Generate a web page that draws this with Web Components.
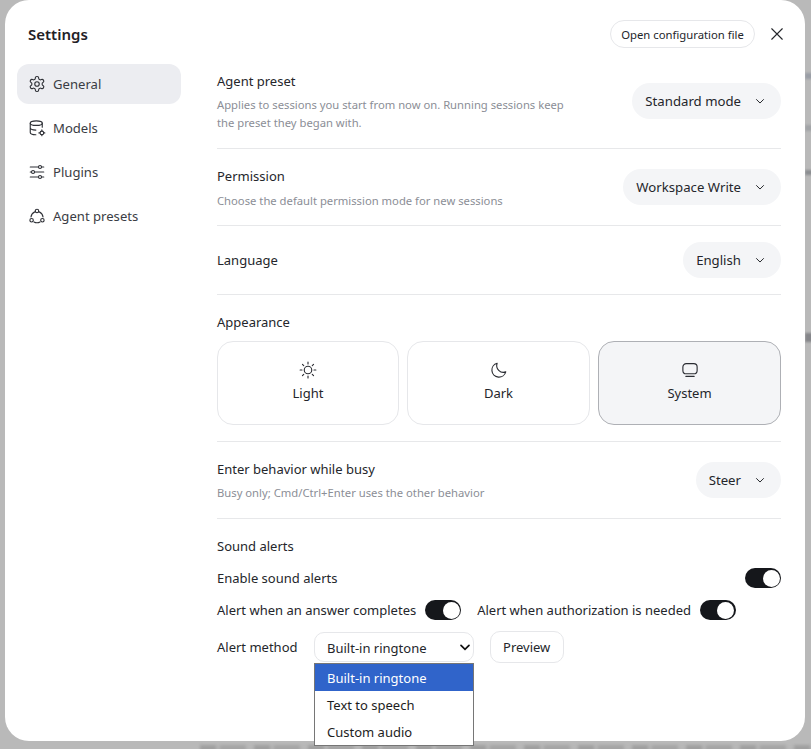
<!DOCTYPE html>
<html lang="en"><head><meta charset="utf-8"><title>Settings</title>
<style>
html,body{margin:0;height:100%;overflow:hidden}
body{background:#b9b9b9;font-family:"Noto Sans","Open Sans",sans-serif;color:#24262b;font-size:13px}
</style></head><body>
<settings-backdrop>
<settings-dialog>
  <span slot="title">Settings</span>
  <nav-item slot="nav" active icon="gear">General</nav-item>
  <nav-item slot="nav" icon="db">Models</nav-item>
  <nav-item slot="nav" icon="sliders">Plugins</nav-item>
  <nav-item slot="nav" icon="preset">Agent presets</nav-item>

  <setting-row style="--h:96px;--mt:6px;--pt:3px" label="Agent preset" desc="Applies to sessions you start from now on. Running sessions keep the preset they began with." value="Standard mode"></setting-row>
  <setting-row style="--h:77px" label="Permission" desc="Choose the default permission mode for new sessions" value="Workspace Write"></setting-row>
  <setting-row style="--h:69px" label="Language" value="English"></setting-row>
  <appearance-section></appearance-section>
  <setting-row style="--h:77px;--mt:6px;--pt:1px" label="Enter behavior while busy" desc="Busy only; Cmd/Ctrl+Enter uses the other behavior" value="Steer"></setting-row>
  <sound-section></sound-section>
</settings-dialog>
</settings-backdrop>
<script>
const FONT='"Noto Sans","Open Sans",sans-serif';
const ICONS={
gear:'<path d="M12.220 2h-.44a2 2 0 0 0-2 2v.18a2 2 0 0 1-1 1.730l-.43.25a2 2 0 0 1-2 0l-.15-.08a2 2 0 0 0-2.730.73l-.22.38a2 2 0 0 0 .73 2.730l.15.1a2 2 0 0 1 1 1.720v.51a2 2 0 0 1-1 1.740l-.15.09a2 2 0 0 0-.73 2.730l.22.38a2 2 0 0 0 2.730.73l.15-.08a2 2 0 0 1 2 0l.43.25a2 2 0 0 1 1 1.730V20a2 2 0 0 0 2 2h.44a2 2 0 0 0 2-2v-.18a2 2 0 0 1 1-1.730l.43-.25a2 2 0 0 1 2 0l.15.08a2 2 0 0 0 2.730-.73l.22-.39a2 2 0 0 0-.73-2.730l-.15-.08a2 2 0 0 1-1-1.740v-.5a2 2 0 0 1 1-1.740l.15-.09a2 2 0 0 0 .73-2.730l-.22-.38a2 2 0 0 0-2.730-.73l-.15.08a2 2 0 0 1-2 0l-.43-.25a2 2 0 0 1-1-1.730V4a2 2 0 0 0-2-2z" stroke-linejoin="round"/><circle cx="12" cy="12" r="3"/>',
db:'<ellipse cx="11" cy="5.500" rx="8" ry="3"/><path d="M3 5.500v12.500c0 1.700 3.300 3 7.500 3M19 5.500V11M3 11.800c0 1.700 3.300 3 7.500 3"/><circle cx="18.500" cy="18.500" r="2.400"/><path d="M18.500 14.500v1.400M18.500 21v1.400M14.500 18.500h1.400M21 18.500h1.400"/>',
sliders:'<path d="M3 5.300h11M18 5.300h3M3 12h1.700M8.700 12H21M3 18.700h11M18 18.700h3"/><circle cx="16" cy="5.300" r="2"/><circle cx="6.700" cy="12" r="2"/><circle cx="16" cy="18.700" r="2"/>',
preset:'<circle cx="12" cy="5.300" r="2.300"/><circle cx="4.800" cy="17.700" r="2.300"/><circle cx="19.200" cy="17.700" r="2.300"/><path d="M9 6.500A8.500 8.500 0 0 0 4 13.200M15 6.500A8.500 8.500 0 0 1 20 13.200M8 20a8.500 8.500 0 0 0 8 0"/>',
sun:'<circle cx="12" cy="12" r="5"/><path d="M12 1.500v2.500M12 20v2.500M1.500 12H4M20 12h2.500M4.600 4.600L6.300 6.300M17.700 17.700l1.700 1.700M4.600 19.400L6.300 17.700M17.700 6.300l1.700-1.700"/>',
moon:'<path d="M21 14.500A9 9 0 0 1 9.500 3a9.400 9.400 0 1 0 11.500 11.500z" stroke-linejoin="round"/>',
monitor:'<rect x="2.500" y="3.500" width="19" height="13.500" rx="4.500"/><path d="M6.500 20.500h11"/>',
chev:'<path d="M6 9.500l6 6 6-6"/>',
x:'<path d="M5 5l14 14M19 5L5 19"/>'
};
function icon(n,s,w){return `<svg width="${s}" height="${s}" viewBox="0 0 24 24" fill="none" stroke="currentColor" stroke-width="${w||1.700}" stroke-linecap="round" aria-hidden="true">${ICONS[n]}</svg>`}

class Base extends HTMLElement{
  render(html){ if(!this.shadowRoot) this.attachShadow({mode:'open'}); this.shadowRoot.innerHTML=html; }
}
customElements.define('settings-backdrop',class extends Base{connectedCallback(){this.render(`<style>
:host{display:block;height:100vh;position:relative;overflow:hidden;background:#b9b9b9}
.strip{position:absolute;left:200px;right:0;top:745px;height:7px;filter:blur(1.800px);opacity:.75;background:repeating-linear-gradient(90deg,#989898 0 16px,#b2b2b2 16px 20px,#9f9f9f 20px 46px,#b7b7b7 46px 54px)}
.spot{position:absolute;left:805px;width:8px;filter:blur(1.200px)}
.wrap{position:relative;padding-left:5px}
</style><div class="strip"></div>
<div class="spot" style="top:73px;height:6px;background:#9a9ea6"></div>
<div class="spot" style="top:125px;height:6px;background:#a2a4a7"></div>
<div class="spot" style="top:170px;height:5px;background:#8c8e91"></div>
<div class="spot" style="top:333px;height:9px;background:#85868a"></div>
<div class="wrap"><slot></slot></div>`);
}});
customElements.define('settings-dialog',class extends Base{connectedCallback(){this.render(`<style>
:host{display:block;width:800px;height:741px;box-sizing:border-box;background:#fff;border-radius:24px;position:relative}
header{display:flex;align-items:flex-start;justify-content:space-between;height:53px;padding:20px 19px 0 23px;box-sizing:border-box}
.t{font:600 15px/28px ${FONT};color:#1f2126}
.acts{display:flex;align-items:center;gap:13px}
.open{font:400 11.300px ${FONT};width:145px;justify-content:center;height:28px;box-sizing:border-box;border:1px solid #e6e7ea;border-radius:14px;background:#fff;color:#24262b;display:flex;align-items:center}
.close{display:flex;color:#24262b}
.body{display:grid;grid-template-columns:164px 564px;column-gap:36px;padding-left:12px}
nav{display:flex;flex-direction:column;gap:4px;padding-top:11px}
main{display:flex;flex-direction:column}
</style><header><div class="t"><slot name="title"></slot></div><div class="acts"><div class="open">Open configuration file</div><div class="close">${icon('x',18,1.500)}</div></div></header>
<div class="body"><nav><slot name="nav"></slot></nav><main><slot></slot></main></div>`)}});
customElements.define('nav-item',class extends Base{connectedCallback(){const a=this.hasAttribute('active');this.render(`<style>
:host{display:flex;align-items:center;gap:7px;height:40px;padding-left:11px;border-radius:12px;font:400 13.100px ${FONT};color:#3a3d44;${a?'background:#ecedf1;':''}}
svg{flex:none;color:#2f3137}
</style>${icon(this.getAttribute('icon'),18,1.500)}<slot></slot>`)}});
customElements.define('select-pill',class extends Base{connectedCallback(){this.render(`<style>
:host{display:inline-flex;align-items:center;gap:12px;height:36px;padding:0 14px 0 13px;border-radius:18px;background:#f4f5f7;font:400 13.200px ${FONT};color:#24262b;white-space:nowrap}
svg{flex:none}
</style><slot></slot>${icon('chev',14,1.700)}`)}});
customElements.define('setting-row',class extends Base{connectedCallback(){const d=this.getAttribute('desc');this.render(`<style>
:host{display:flex;align-items:center;justify-content:space-between;box-sizing:border-box;height:var(--h);border-bottom:1px solid #e7e8ea}
.txt.has{padding-top:var(--pt,2px)}
.l{font:400 13px/18px ${FONT};color:#24262b}
.d{font:400 11.250px/18px ${FONT};color:#8b8e96;width:355px;margin-top:var(--mt,7px)}
</style><div class="txt ${d?'has':''}"><div class="l">${this.getAttribute('label')}</div>${d?`<div class="d">${d}</div>`:''}</div><select-pill>${this.getAttribute('value')}</select-pill>`)}});
customElements.define('mode-card',class extends Base{connectedCallback(){const a=this.hasAttribute('active');this.render(`<style>
:host{display:flex;flex-direction:column;align-items:center;justify-content:center;gap:5px;height:84px;box-sizing:border-box;padding-bottom:3px;border-radius:16px;border:1px solid ${a?'#aeb0b5':'#e6e7ea'};background:${a?'#f4f5f7':'#fff'};font:400 13px/18px ${FONT};color:#24262b}
svg{display:block;color:#2a2c32}
</style>${icon(this.getAttribute('icon'),18,1.500)}<slot></slot>`)}});
customElements.define('appearance-section',class extends Base{connectedCallback(){this.render(`<style>
:host{display:block;box-sizing:border-box;height:147px;border-bottom:1px solid #e7e8ea;padding-top:18px}
.l{font:400 13px/18px ${FONT};color:#24262b;margin-bottom:10px}
.g{display:grid;grid-template-columns:182px 183px 183px;gap:8px}
</style><div class="l">Appearance</div><div class="g"><mode-card icon="sun">Light</mode-card><mode-card icon="moon">Dark</mode-card><mode-card icon="monitor" active>System</mode-card></div>`)}});
customElements.define('toggle-switch',class extends Base{connectedCallback(){this.render(`<style>
:host{display:inline-block;width:36px;height:20px;border-radius:10px;background:#15171b;position:relative;flex:none}
i{position:absolute;right:1.500px;top:1.500px;width:17px;height:17px;border-radius:50%;background:#fff}
</style><i></i>`)}});
customElements.define('sound-section',class extends Base{connectedCallback(){this.render(`<style>
:host{display:block;padding-top:18px;font:400 13px/18px ${FONT};color:#24262b}
.h{margin-bottom:13px}
.r{display:flex;align-items:center;height:20px;margin-bottom:12px}
.sb{justify-content:space-between}
.g{gap:9px;margin-bottom:11px}
.g toggle-switch+span{margin-left:7px}
.m{display:flex;align-items:flex-start;gap:16px;position:relative;height:32px}
.m .lb{line-height:32px}
.col{position:relative;height:32px}
.sel{width:160px;height:30px;margin-top:1px;box-sizing:border-box;border:1px solid #e6e7ea;border-radius:10px;display:flex;align-items:center;justify-content:space-between;padding:0 0 0 12.500px;color:#24262b;background:#fff}
.sel span{padding-top:1px}
.sel svg{color:#111;flex:none}
.btn{height:32px;box-sizing:border-box;padding:0 12.500px;border:1px solid #e6e7ea;border-radius:10px;display:flex;align-items:center;background:#fff}
.pop{position:absolute;left:0;top:32px;width:160px;box-sizing:border-box;border:1px solid #767676;background:#fff;color:#1d1d1d;z-index:2}
.pop div{height:27px;line-height:29px;padding-left:12.500px;overflow:hidden}
.pop .on{background:#3064ca;color:#fff}
</style><div class="h">Sound alerts</div>
<div class="r sb"><span>Enable sound alerts</span><toggle-switch></toggle-switch></div>
<div class="r g"><span>Alert when an answer completes</span><toggle-switch></toggle-switch><span>Alert when authorization is needed</span><toggle-switch></toggle-switch></div>
<div class="m"><span class="lb">Alert method</span><div class="col"><div class="sel"><span>Built-in ringtone</span>${icon('chev',16,2.600)}</div><div class="pop"><div class="on">Built-in ringtone</div><div>Text to speech</div><div>Custom audio</div></div></div><div class="btn">Preview</div></div>`)}});
</script>
</body></html>
